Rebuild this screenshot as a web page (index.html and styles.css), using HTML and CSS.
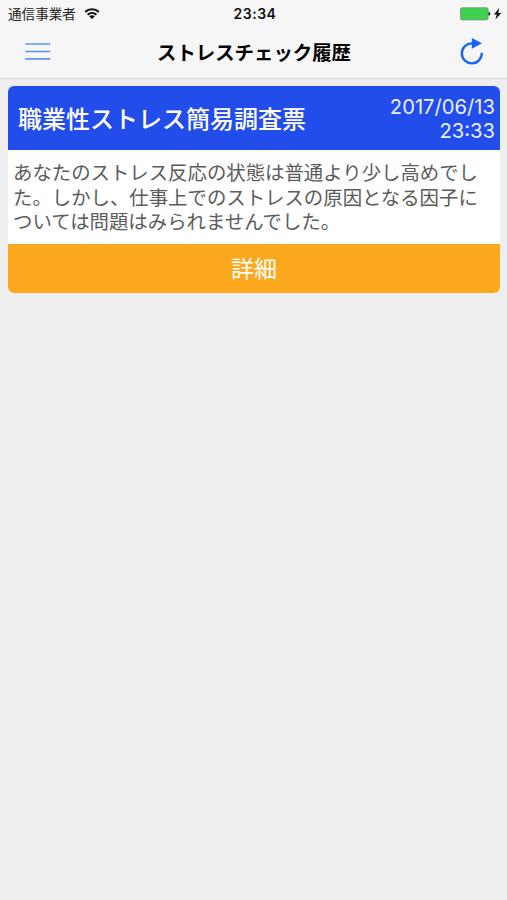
FILE: index.html
```html
<!DOCTYPE html>
<html lang="ja">
<head>
    <meta charset="UTF-8">
    <meta name="viewport" content="width=device-width, initial-scale=1.0">
    <title>ストレスチェック履歴</title>
    <link rel="stylesheet" href="styles.css">
</head>
<body>
    <header class="header">
        <div class="status-bar">
            <div class="carrier">
                <span>通信事業者</span>
                <svg class="wifi" viewBox="0 0 16 12" width="16" height="12">
                    <path d="M1.2 3.9C5 .3 11 .3 14.8 3.9M3.6 6.7C6.2 4.4 9.8 4.4 12.4 6.7" fill="none" stroke="#111" stroke-width="2.1"/>
                    <path d="M5.2 8.3C6.8 6.9 9.2 6.9 10.8 8.3L8 11.1Z" fill="#111"/>
                </svg>
            </div>
            <span class="clock">23:34</span>
            <div class="power">
                <svg viewBox="0 0 42 14" width="42" height="14">
                    <rect x=".5" y=".7" width="27.6" height="12.2" rx="1.5" fill="#3dd150" stroke="#7a8a7c" stroke-width=".7"/>
                    <path d="M28.5 4.8c2.4 0 2.4 4 0 4z" fill="#222"/>
                    <path d="M39.3 1L33.9 7.6H36.8L35.4 12.5L41.3 5.9H38.3Z" fill="#111"/>
                </svg>
            </div>
        </div>
        <nav class="nav-bar">
            <a href="#" class="menu" aria-label="メニュー">
                <svg viewBox="0 0 26 18" width="26" height="18">
                    <path d="M.3 1h25M.3 8.5h25M.3 15.8h25" stroke="#5b95f0" stroke-width="1.7"/>
                </svg>
            </a>
            <h1 class="nav-title">ストレスチェック履歴</h1>
            <a href="#" class="reload" aria-label="更新">
                <svg viewBox="0 0 24 28" width="24" height="28">
                    <path d="M13 5.4H11.8A10 10 0 1 0 21.8 14.9" fill="none" stroke="#1668f2" stroke-width="2.4"/>
                    <path d="M11.8 0L22 5.2L11.8 10.8Z" fill="#1668f2"/>
                </svg>
            </a>
        </nav>
    </header>

    <main class="history">
        <section class="card">
            <div class="card-header">
                <h2 class="card-title">職業性ストレス簡易調査票</h2>
                <div class="card-date">2017/06/13<br>23:33</div>
            </div>
            <p class="card-text">あなたのストレス反応の状態は普通より少し高めでした。しかし、仕事上でのストレスの原因となる因子については問題はみられませんでした。</p>
            <a href="#" class="card-button">詳細</a>
        </section>
    </main>
</body>
</html>
```
FILE: styles.css
```css
body {
    margin: 0;
    min-height: 100vh;
    background-color: #eeeeee;
    font-family: Inter, "Noto Sans CJK JP", sans-serif;
}

a {
    text-decoration: none;
}

svg {
    display: block;
}

.header {
    height: 78px;
    background-color: #f6f6f6;
    border-bottom: 1px solid #d8d8d8;
}

/* Status bar */
.status-bar {
    display: grid;
    grid-template-columns: 1fr auto 1fr;
    align-items: center;
    height: 27px;
    padding: 0 5px 0 8px;
    color: #222;
    font-size: 13.6px;
    line-height: 20px;
}

.carrier {
    display: flex;
    align-items: center;
    gap: 8px;
}

.clock {
    color: #111;
    font-size: 14px;
    font-weight: 600;
    letter-spacing: 0.5px;
}

.power {
    justify-self: end;
}

/* Navigation bar */
.nav-bar {
    display: grid;
    grid-template-columns: 1fr auto 1fr;
    align-items: center;
    height: 50px;
    padding: 0 23px 0 25px;
}

.nav-title {
    margin: 0;
    padding: 2px 1px 0 0;
    color: #000;
    font-size: 19.4px;
    font-weight: 700;
    line-height: 28px;
}

.reload {
    justify-self: end;
}

/* History cards */
.history {
    padding: 7px 7px 0 8px;
}

.card {
    overflow: hidden;
    border-radius: 6px;
    background-color: #fff;
}

.card-header {
    display: flex;
    justify-content: space-between;
    align-items: center;
    box-sizing: border-box;
    height: 64px;
    padding: 2px 5px 0 10px;
    background-color: #234deb;
    color: #fff;
}

.card-title {
    margin: 0;
    padding-top: 1px;
    font-size: 24px;
    font-weight: 500;
    line-height: 36px;
}

.card-date {
    color: #e9eeff;
    font-size: 20.2px;
    line-height: 24.5px;
    text-align: right;
}

.card-text {
    margin: 0;
    padding: 11px 5px 9px;
    color: #5c5c5c;
    font-size: 19.4px;
    line-height: 24.6px;
}

.card-button {
    display: block;
    height: 49px;
    background-color: #fca81f;
    color: #fff;
    font-size: 23px;
    line-height: 51px;
    text-align: center;
}
```
